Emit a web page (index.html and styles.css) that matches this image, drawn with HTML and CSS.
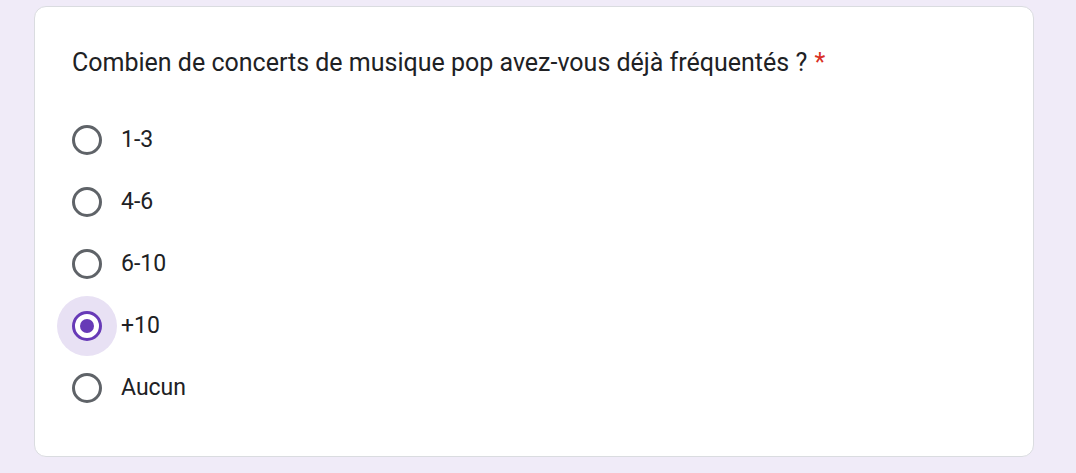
FILE: index.html
```html
<!DOCTYPE html>
<html lang="fr">
<head>
<meta charset="utf-8">
<link rel="stylesheet" href="styles.css">
</head>
<body>
<div class="page">
  <div class="card">
    <div class="title">Combien de concerts de musique pop avez-vous déjà fréquentés ? <span class="req">*</span></div>
    <div class="options">
      <div class="option"><span class="radio"></span><span class="label">1-3</span></div>
      <div class="option"><span class="radio"></span><span class="label">4-6</span></div>
      <div class="option"><span class="radio"></span><span class="label">6-10</span></div>
      <div class="option"><span class="radio checked"></span><span class="label">+10</span></div>
      <div class="option"><span class="radio"></span><span class="label">Aucun</span></div>
    </div>
  </div>
</div>
</body>
</html>
```

FILE: styles.css
```css
html, body {
  margin: 0;
  padding: 0;
  background: #f0ebf8;
  font-family: Roboto, "Liberation Sans", Arial, sans-serif;
  color: #202124;
}
.page {
  padding: 6px 0 0 34px;
  height: 467px;
}
.card {
  width: 998px;
  height: 449px;
  background: #fff;
  border: 1px solid #dadce0;
  border-radius: 12px;
}
.title {
  padding: 38px 36px 0 37px;
  font-size: 25px;
  line-height: 36px;
}
.req {
  color: #d93025;
  margin-left: 1px;
}
.options {
  margin-top: 28px;
  padding-left: 37px;
  display: flex;
  flex-direction: column;
}
.option {
  height: 62px;
  display: flex;
  align-items: center;
  gap: 19px;
}
.radio {
  position: relative;
  width: 30px;
  height: 30px;
  box-sizing: border-box;
  border: 3px solid #5f6368;
  border-radius: 50%;
  flex: none;
}
.radio.checked {
  border-color: #673ab7;
  background: #fff;
  box-shadow: 0 0 0 15px #e8e1f4;
}
.radio.checked::after {
  content: "";
  position: absolute;
  left: 5px;
  top: 5px;
  width: 14px;
  height: 14px;
  border-radius: 50%;
  background: #673ab7;
}
.label {
  font-size: 23px;
  line-height: 30px;
}
```
